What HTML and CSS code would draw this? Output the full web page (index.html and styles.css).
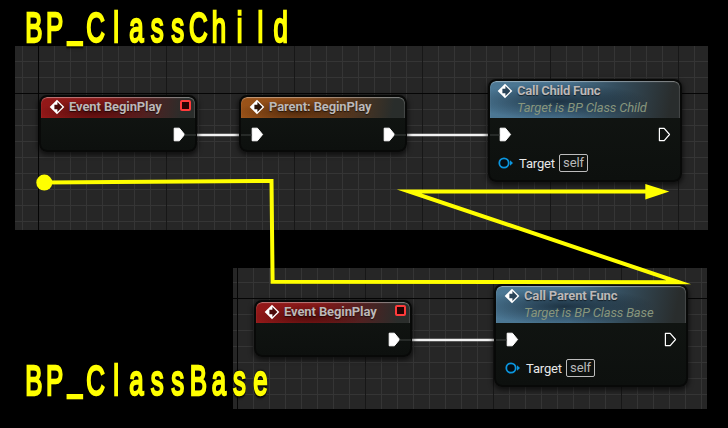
FILE: index.html
```html
<!DOCTYPE html>
<html lang="en">
<head>
<meta charset="utf-8">
<title>Blueprint call order</title>
<link rel="stylesheet" href="styles.css">
</head>
<body>
<svg class="defs" width="0" height="0">
  <defs>
    <symbol id="diamond" viewBox="0 0 16 16">
      <path d="M8 .7 15.3 8 8 15.3.7 8Z" fill="#fff"/>
      <path fill="currentColor" d="M8.4 3 13.4 8 8.4 13V10.3H5.4V5.7H8.4Z"/>
    </symbol>
    <symbol id="exec" viewBox="0 0 13 15">
      <path d="M1.2 1.2H6.4L11.6 7.5 6.4 13.8H1.2Z" fill="#fff" stroke="#fff" stroke-linejoin="round"/>
    </symbol>
    <symbol id="exec-open" viewBox="0 0 13 15">
      <path d="M1.4 1.4H6.2L11.5 7.5 6.2 13.6H1.4Z" fill="none" stroke="#fff" stroke-width="1.2" stroke-linejoin="round"/>
    </symbol>
    <symbol id="object" viewBox="0 0 16 12">
      <circle cx="6" cy="6" r="4.7" fill="#040c12" stroke="#0b96df" stroke-width="1.8"/>
      <path d="M12 3.3 15 6 12 8.7Z" fill="#0b96df"/>
    </symbol>
  </defs>
</svg>
<main class="canvas">
  <section class="graph child"></section>
  <section class="graph base"></section>

  <svg class="layer" viewBox="0 0 728 428">
    <g class="wire">
      <path d="M184 135H252M394 135H500M399 340H507"/>
    </g>
  </svg>

  <article class="node event n1">
    <header><svg class="glyph"><use href="#diamond"/></svg><h2>Event BeginPlay</h2><i class="delegate"></i></header>
    <div class="pins"><svg class="exec out"><use href="#exec"/></svg></div>
  </article>
  <article class="node parent n2">
    <header><svg class="glyph"><use href="#diamond"/></svg><h2>Parent: BeginPlay</h2></header>
    <div class="pins"><svg class="exec"><use href="#exec"/></svg><svg class="exec out"><use href="#exec"/></svg></div>
  </article>
  <article class="node func n3">
    <header><svg class="glyph"><use href="#diamond"/></svg><div><h2>Call Child Func</h2><p>Target is BP Class Child</p></div></header>
    <div class="pins"><svg class="exec"><use href="#exec"/></svg><svg class="exec out"><use href="#exec-open"/></svg></div>
    <div class="target"><svg class="object"><use href="#object"/></svg><span>Target</span><b>self</b></div>
  </article>
  <article class="node event n4">
    <header><svg class="glyph"><use href="#diamond"/></svg><h2>Event BeginPlay</h2><i class="delegate"></i></header>
    <div class="pins"><svg class="exec out"><use href="#exec"/></svg></div>
  </article>
  <article class="node func n5">
    <header><svg class="glyph"><use href="#diamond"/></svg><div><h2>Call Parent Func</h2><p>Target is BP Class Base</p></div></header>
    <div class="pins"><svg class="exec"><use href="#exec"/></svg><svg class="exec out"><use href="#exec-open"/></svg></div>
    <div class="target"><svg class="object"><use href="#object"/></svg><span>Target</span><b>self</b></div>
  </article>

  <svg class="layer" viewBox="0 0 728 428">
    <g class="wire faint">
      <path d="M184 135H196M241 135H252M394 135H406M490 135H500M399 340H411M496 340H507"/>
    </g>
    <path class="flow" d="M44 182.6 271.5 180.9 272.6 281.8 679 282.3 409 191.4H648"/>
    <circle cx="44.3" cy="182.6" r="8" fill="#ff0"/>
    <path d="M645.3 184 669.3 191.6 645.3 199.5Z" fill="#ff0"/>
    <g class="caption">
      <text transform="translate(0 42.2) scale(.6 1)" x="56.3 91.2 125 159.2 193.5 227.5 261.8 296.2 330.6 365 399.2 434 467.9">BP<tspan dy="-5">_</tspan><tspan dy="5">C</tspan>lassChild</text>
      <text transform="translate(0 395.3) scale(.6 1)" x="56.3 91.2 125 159.2 193.5 227.5 261.8 296.2 330.6 365 399.2 434">BP<tspan dy="-5">_</tspan><tspan dy="5">C</tspan>lassBase</text>
    </g>
  </svg>
</main>
</body>
</html>
```
FILE: styles.css
```css
* { box-sizing: border-box; }
body { margin: 0; background: #000; font-family: Roboto, "Liberation Sans", sans-serif; }
h2, p { margin: 0; }
.defs { position: absolute; }
.canvas { position: relative; width: 728px; height: 428px; overflow: hidden; }
.layer { position: absolute; inset: 0; width: 728px; height: 428px; }

.graph {
  position: absolute;
  background-color: #262626;
  background-image:
    linear-gradient(90deg, #050505 1px, transparent 1px),
    linear-gradient(#050505 1px, transparent 1px),
    linear-gradient(90deg, #171717 1px, transparent 1px),
    linear-gradient(90deg, #353535 1px, transparent 1px),
    linear-gradient(#353535 1px, transparent 1px);
  background-size: 2000px 100%, 100% 2000px, 128px 100%, 16px 100%, 100% 16px;
}
.child { left: 15px; top: 46px; width: 693px; height: 184px; background-position: 23px 0, 0 47px, 23px 0, 7px 0, 0 15px; }
.base { left: 233px; top: 268px; width: 474px; height: 141px; background-position: 4px 0, 0 30px, 4px 0, 4px 0, 0 14px; }

.node {
  position: absolute;
  display: flex;
  flex-direction: column;
  border: 2px solid #080908;
  border-radius: 8px;
  background: linear-gradient(#121613, #0d100e);
  box-shadow: 0 2px 5px 1px rgba(0, 0, 0, .6);
  overflow: hidden;
}
.n1 { left: 39px; top: 95px; width: 158px; height: 57px; }
.n2 { left: 239px; top: 95px; width: 168px; height: 57px; }
.n3 { left: 488px; top: 79px; width: 194px; height: 103px; }
.n4 { left: 254px; top: 300px; width: 158px; height: 57px; }
.n5 { left: 494px; top: 284px; width: 194px; height: 103px; }

header {
  display: flex;
  height: 21px;
  flex: none;
  padding: 2px 4px 0 8px;
  border-radius: 6px 6px 0 0;
  box-shadow: inset 0 1px 1px rgba(255, 255, 255, .42), inset -1px 0 1px rgba(255, 255, 255, .1);
}
.event header { background: radial-gradient(ellipse 55px 12px at 34% 70%, rgba(35, 0, 0, .55), transparent), linear-gradient(100deg, #941818 0%, #851919 40%, #571f1f 65%, #2a2d2b 92%); }
.parent header { background: radial-gradient(ellipse 60px 12px at 34% 70%, rgba(35, 15, 0, .55), transparent), linear-gradient(100deg, #9c5318 0%, #85491b 42%, #53361f 67%, #292d2b 92%); }
.func header { height: 37px; padding-left: 7px; background: radial-gradient(ellipse 90px 18px at 36% 55%, rgba(10, 22, 32, .68), transparent), linear-gradient(100deg, #4c7895 0%, #47708c 40%, #344d5d 65%, #292d2d 94%); }
.glyph { width: 16px; height: 16px; flex: none; margin-right: 4px; color: #2a1408; }
.event .glyph { color: #4a0a0a; }
.func .glyph { color: #2a4458; }
h2 { font-size: 13px; line-height: 15px; letter-spacing: -.11px; font-weight: 700; color: #bcb8b8; white-space: nowrap; text-shadow: 0 1px 1px rgba(0, 0, 0, .6); }
.func h2 { line-height: 16px; letter-spacing: -.25px; }
.n5 h2 { letter-spacing: -.15px; }
header p { font-size: 13px; line-height: 17px; letter-spacing: -.15px; font-style: italic; color: #87957c; white-space: nowrap; }
.delegate { width: 11px; height: 11px; margin: 1px 0 0 auto; border: 2px solid #ff3b3b; border-radius: 2px; background: #260303; }

.pins { display: flex; padding: 9px 9px 0 10px; height: 26px; flex: none; }
.func .pins { padding: 9px 9px 0 9px; }
.exec { width: 13px; height: 15px; }
.out { margin-left: auto; }
.target { display: flex; align-items: center; margin: 10px 0 0 8px; height: 18px; color: #e8e8e8; font-size: 13px; letter-spacing: -.15px; }
.func.n5 header { padding-left: 8px; }
.func.n5 .pins { padding-left: 10px; }
.n5 .target { margin-left: 9px; }
.object { width: 16px; height: 12px; margin-right: 5px; }
.target b { margin-left: 4px; height: 18px; width: 29px; border: 1px solid #bdbdbd; border-radius: 2px; text-align: center; font-weight: 400; line-height: 16px; color: #b9b9b9; }

.wire { stroke: #f2f2f2; stroke-width: 2.6; fill: none; }
.faint { stroke: #3d403e; stroke-width: 2; opacity: .55; }
.flow { fill: none; stroke: #ff0; stroke-width: 4; stroke-miterlimit: 12; }
.caption text {
  font-family: "Liberation Sans", sans-serif;
  font-size: 43px;
  text-anchor: middle;
  fill: #ff0;
  stroke: #ff0;
  stroke-width: 2px;
  filter: drop-shadow(0 0 1px #000) drop-shadow(0 1px 1px #000);
}
.caption text, .caption tspan { vector-effect: non-scaling-stroke; }
```
